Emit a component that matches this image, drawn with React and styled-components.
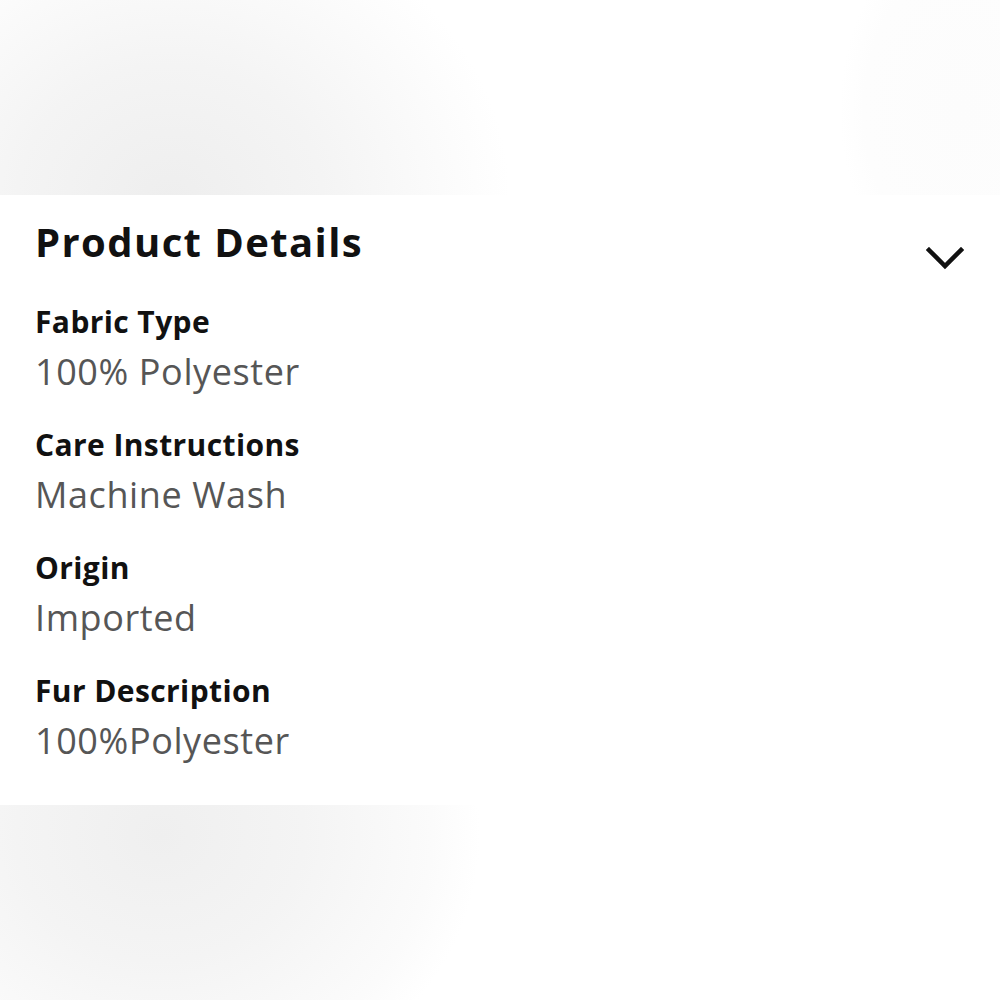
import React from 'react'
import styled, { createGlobalStyle } from 'styled-components'

const GlobalStyle = createGlobalStyle`
  html, body {
    margin: 0;
    padding: 0;
    background: #ffffff;
  }
  body {
    font-family: "Open Sans", "Noto Sans", sans-serif;
  }
`

const Page = styled.div`
  width: 1000px;
  height: 1000px;
  display: flex;
  flex-direction: column;
  overflow: hidden;
`

const TopBand = styled.div`
  height: 195px;
  flex-shrink: 0;
  background:
    radial-gradient(ellipse 340px 300px at 170px 200px, #eeeeee 0%, #f4f4f4 45%, #fcfcfc 85%, rgba(255,255,255,0) 100%),
    radial-gradient(ellipse 120px 180px at 960px 110px, #fcfcfc 0%, #fdfdfd 80%, rgba(255,255,255,0) 100%),
    #ffffff;
`

const BottomBand = styled.div`
  flex: 1;
  background:
    radial-gradient(ellipse 320px 280px at 160px 30px, #efefef 0%, #f4f4f4 45%, #fbfbfb 85%, rgba(255,255,255,0) 100%),
    #ffffff;
`

const Panel = styled.section`
  background: #ffffff;
  padding: 23px 36px 40px 35px;
  flex-shrink: 0;
`

const Header = styled.div`
  display: flex;
  justify-content: space-between;
  align-items: flex-start;
`

const Title = styled.h2`
  margin: 0;
  font-size: 40px;
  line-height: 48px;
  font-weight: 700;
  color: #111111;
  letter-spacing: 1.4px;
`

const Chevron = styled.svg`
  margin-top: 29px;
  width: 38px;
  height: 24px;
  flex-shrink: 0;
`

const List = styled.dl`
  margin: 33px 0 0;
  display: flex;
  flex-direction: column;
  gap: 31px;
`

const Row = styled.div`
  display: flex;
  flex-direction: column;
`

const Label = styled.dt`
  font-size: 30px;
  line-height: 36px;
  font-weight: 700;
  color: #111111;
  letter-spacing: 0.4px;
`

const Value = styled.dd`
  margin: 8px 0 0;
  font-size: 36px;
  line-height: 48px;
  font-weight: 400;
  color: #565656;
  letter-spacing: 0.6px;
`

const details = [
  { label: 'Fabric Type', value: '100% Polyester' },
  { label: 'Care Instructions', value: 'Machine Wash' },
  { label: 'Origin', value: 'Imported' },
  { label: 'Fur Description', value: '100%Polyester' }
]

export default function App() {
  return (
    <Page>
      <GlobalStyle />
      <TopBand />
      <Panel>
        <Header>
          <Title>Product Details</Title>
          <Chevron viewBox="0 0 38 24" fill="none">
            <path d="M3 3 L19 19 L35 3" stroke="#111111" strokeWidth="4.5" strokeLinecap="square" strokeLinejoin="miter" />
          </Chevron>
        </Header>
        <List>
          {details.map((d) => (
            <Row key={d.label}>
              <Label>{d.label}</Label>
              <Value>{d.value}</Value>
            </Row>
          ))}
        </List>
      </Panel>
      <BottomBand />
    </Page>
  )
}
